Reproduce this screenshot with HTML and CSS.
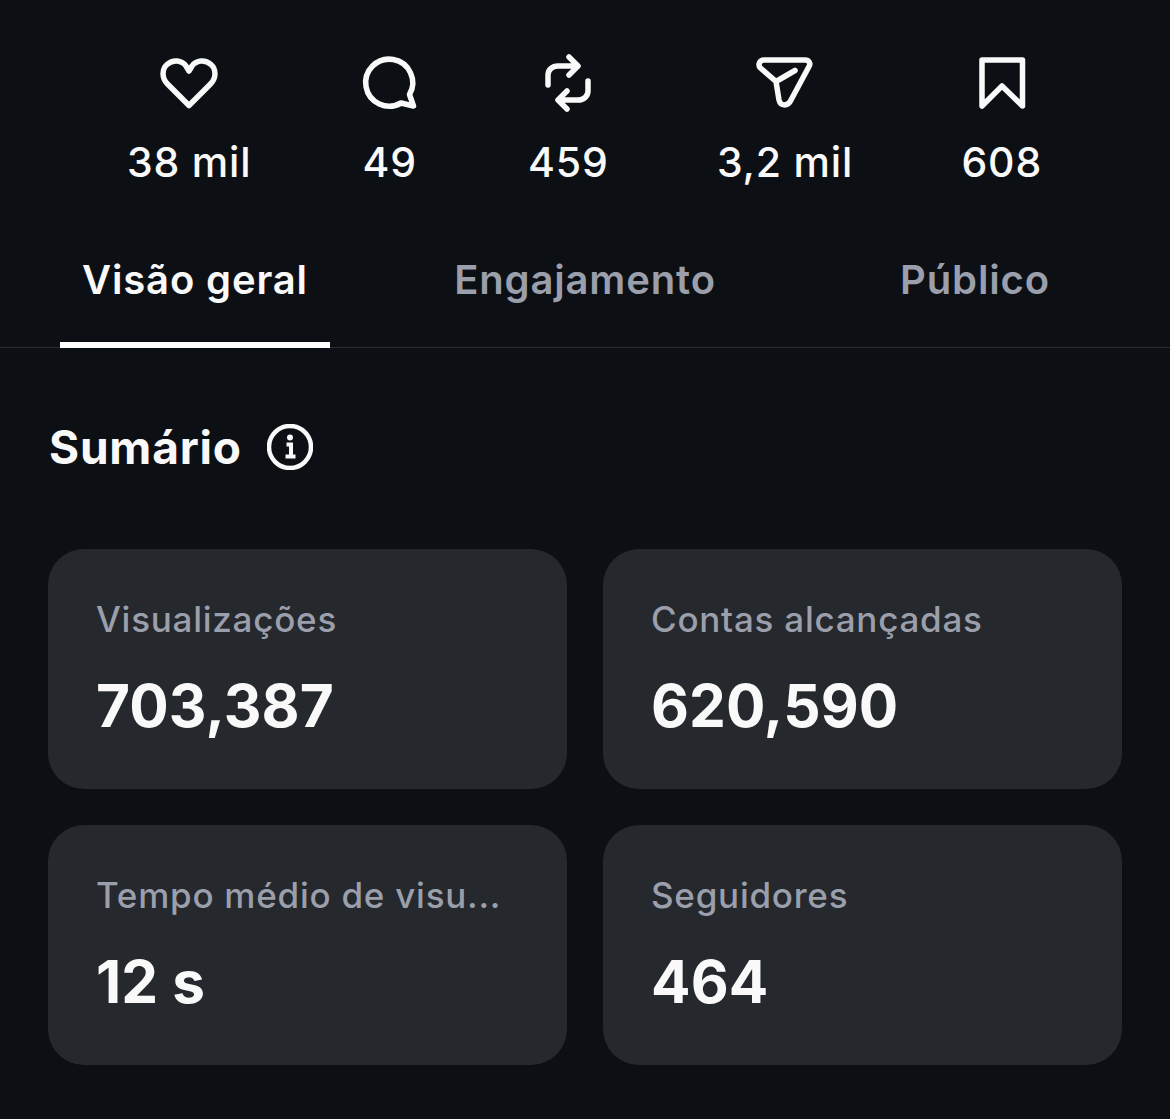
FILE: index.html
```html
<!DOCTYPE html>
<html lang="pt">
<head>
<meta charset="utf-8">
<title>Insights</title>
<link rel="stylesheet" href="styles.css">
</head>
<body>
<section class="stats">
  <div class="stat">
    <svg class="icon" viewBox="0 0 60 60"><path d="M30 51.500 L8.500 30 C2.500 24 2.800 15 8 10.500 C14 5 23 6 27 12 L30 17 L33 12 C37 6 46 5 52 10.500 C57.200 15 57.500 24 51.500 30 Z"/></svg>
    <span>38 mil</span>
  </div>
  <div class="stat">
    <svg class="icon" viewBox="0 0 60 60"><path d="M49.500 40.500 L53.500 52 L41 49 A23.500 23.500 0 1 1 49.500 40.500 Z"/></svg>
    <span>49</span>
  </div>
  <div class="stat">
    <svg class="icon" viewBox="0 0 60 60"><path d="M31 3 L40 12 L31 21 M38 12 H20 C14 12 10 16 10 21 V31 M29 55 L20 46 L29 37 M22 46 H40 C46 46 50 42 50 37 V27"/></svg>
    <span>459</span>
  </div>
  <div class="stat">
    <svg class="icon" viewBox="0 0 60 60"><path d="M9 6 H50 C54 6 56 9.500 54 12.500 L36 46 C33 52.500 25.500 52.500 24 46 L21 27.500 L5.500 14 C2.500 11 4.500 6 9 6 Z M21 27.500 L40 16.500"/></svg>
    <span>3,2 mil</span>
  </div>
  <div class="stat">
    <svg class="icon" viewBox="0 0 60 60"><path d="M10 6 H50.500 V52 L30 32 L10 52 Z"/></svg>
    <span>608</span>
  </div>
</section>

<nav class="tabs">
  <a class="tab active">Visão geral</a>
  <a class="tab">Engajamento</a>
  <a class="tab">Público</a>
</nav>

<main class="content">
  <h2 class="title">Sumário
    <svg class="info" viewBox="0 0 46 46"><circle cx="23" cy="23" r="21"/><path class="info-line" d="M19.500 20.500 H24 V32 M18.500 32.500 H28.500"/><circle class="info-dot" cx="23" cy="13.500" r="3"/></svg>
  </h2>
  <div class="grid">
    <div class="card"><div class="label">Visualizações</div><div class="value">703,387</div></div>
    <div class="card"><div class="label">Contas alcançadas</div><div class="value">620,590</div></div>
    <div class="card"><div class="label">Tempo médio de visu...</div><div class="value">12 s</div></div>
    <div class="card"><div class="label">Seguidores</div><div class="value">464</div></div>
  </div>
</main>
</body>
</html>
```
FILE: styles.css
```css
* { box-sizing: border-box; }
html, body { margin: 0; height: 100%; }
body {
  background: #0c1015;
  color: #f9f9fa;
  font-family: Inter, "Liberation Sans", sans-serif;
  overflow: hidden;
}
.stats {
  display: flex;
  justify-content: space-between;
  padding: 54px 128px 0 127px;
  height: 230px;
}
.stat {
  display: flex;
  flex-direction: column;
  align-items: center;
  gap: 23px;
  font-size: 41px;
  letter-spacing: 0.800px;
  font-weight: 550;
  line-height: 50px;
}
.icon {
  width: 60px;
  height: 60px;
  fill: none;
  stroke: #f9f9fa;
  stroke-width: 5.500;
  stroke-linecap: round;
  stroke-linejoin: round;
}
.tabs {
  display: grid;
  grid-template-columns: repeat(3, 1fr);
  height: 118px;
  border-bottom: 1px solid #2a2c35;
}
.tab {
  display: flex;
  align-items: flex-start;
  justify-content: center;
  padding-top: 26px;
  font-size: 40px;
  letter-spacing: 0.850px;
  line-height: 47px;
  font-weight: 600;
  color: #9a9fab;
  margin: 0 60px;
  height: 118px;
}
.tab.active {
  color: #f9f9fa;
  border-bottom: 6px solid #fff;
}
.content { padding: 67px 48px 0; }
.title {
  display: flex;
  align-items: center;
  gap: 26px;
  margin: 0 0 70px 1px;
  font-size: 46px;
  letter-spacing: 0.800px;
  line-height: 64px;
  font-weight: 700;
}
.info {
  width: 46px;
  height: 46px;
  margin-left: -1px;
  fill: none;
  stroke: #f9f9fa;
  stroke-width: 4.500;
}
.info-line { stroke-width: 4; }
.info-dot { fill: #f9f9fa; stroke: none; }
.grid {
  display: grid;
  grid-template-columns: repeat(2, 1fr);
  gap: 36px;
}
.card {
  background: #25282d;
  border-radius: 36px;
  height: 240px;
  padding: 48px 48px 0;
  min-width: 0;
}
.label {
  font-size: 35px;
  letter-spacing: 0.750px;
  line-height: 44px;
  font-weight: 550;
  color: #9a9fab;
}
.value {
  margin-top: 30px;
  font-size: 58.500px;
  letter-spacing: 0.100px;
  line-height: 70px;
  font-weight: 700;
  color: #f9f9fa;
}
```
